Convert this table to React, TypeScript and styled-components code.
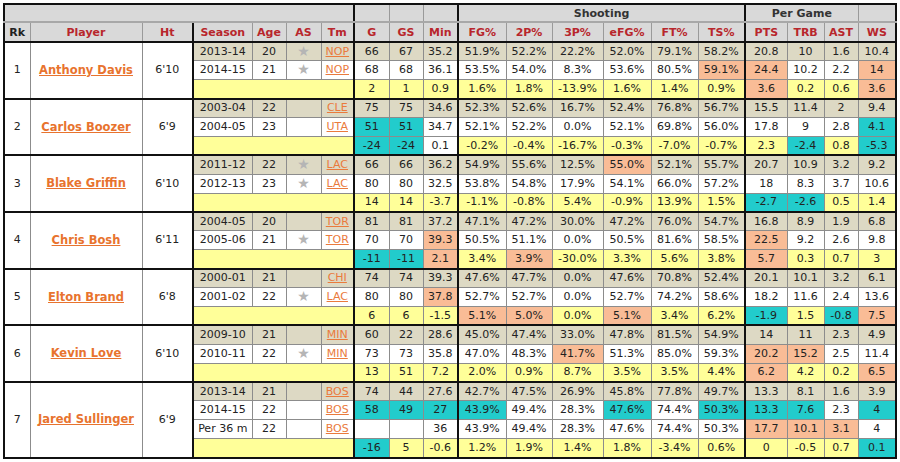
import React from 'react';
import styled, { createGlobalStyle } from 'styled-components';

const Global = createGlobalStyle`
  html, body { margin: 0; padding: 0; background: #ffffff; }
  body { font-family: "DejaVu Sans", Verdana, sans-serif; }
`;

type Bg = 'tan' | 'white' | 'yellow' | 'o' | 'c' | 'w' | 'gray';

const bgColor: Record<Bg, string> = {
  tan: '#ddd9c4',
  white: '#ffffff',
  yellow: '#ffff99',
  o: '#f9bc96',
  c: '#22cccc',
  w: '#ffffff',
  gray: '#d9d9d9',
};

const Page = styled.div`
  width: 900px;
  height: 462px;
  overflow: hidden;
  padding: 3px 0 0 3px;
  box-sizing: border-box;
`;

const Table = styled.table`
  border-collapse: collapse;
  table-layout: fixed;
  width: 894px;
  border: 2px solid #111;
  font-size: 11px;
  color: #222;
`;

const Col = styled.col<{ $w: number }>`
  width: ${(p) => p.$w}px;
`;

const GroupTh = styled.th<{ $thick?: boolean }>`
  height: 16px;
  padding: 0;
  background: #d9d9d9;
  border: 1px solid #9a9a9a;
  border-right: ${(p) => (p.$thick ? '2px solid #111' : '1px solid #9a9a9a')};
  border-bottom: 2px solid #a8a8a8;
  font-weight: bold;
  color: #333;
  text-align: center;
  font-size: 11px;
`;

const HeadTh = styled.th<{ $thick?: boolean; $black?: boolean }>`
  height: 18px;
  padding: 0;
  background: #d9d9d9;
  border: 1px solid #9a9a9a;
  border-right: ${(p) => (p.$thick ? '2px solid #111' : '1px solid #9a9a9a')};
  border-bottom: 2px solid #111;
  font-weight: bold;
  color: ${(p) => (p.$black ? '#222' : '#b8262c')};
  text-align: center;
  font-size: 11px;
  white-space: nowrap;
`;

const Tr = styled.tr`
  height: 18.9px;
`;

const Td = styled.td<{ $bg: Bg; $thick?: boolean; $last?: boolean }>`
  padding: 0;
  background: ${(p) => bgColor[p.$bg]};
  border: 1px solid #8c8c8c;
  border-right: ${(p) => (p.$thick ? '2px solid #111' : '1px solid #8c8c8c')};
  border-bottom: ${(p) => (p.$last ? '2px solid #111' : '1px solid #8c8c8c')};
  text-align: center;
  white-space: nowrap;
  overflow: hidden;
  line-height: 14px;
`;

const PlayerLink = styled.a`
  color: #e8732e;
  font-weight: bold;
  font-size: 11.5px;
  text-decoration: underline;
`;

const TeamLink = styled.a`
  color: #ea7a3c;
  text-decoration: underline;
`;

const Star = styled.span`
  color: #b5b5b5;
  font-size: 14px;
  line-height: 1;
`;

const widths = [26, 112, 51, 59, 34, 35, 33, 35, 34, 35, 48, 46, 51, 48, 47, 47, 42, 37, 34, 38];
// thick right border after these column indexes
const thickAfter = new Set([2, 6, 9, 15, 19]);

const headers = ['Rk', 'Player', 'Ht', 'Season', 'Age', 'AS', 'Tm', 'G', 'GS', 'Min', 'FG%', '2P%', '3P%', 'eFG%', 'FT%', 'TS%', 'PTS', 'TRB', 'AST', 'WS'];

type Row = { s: string; a: string; star: boolean; tm: string; v: string };
type Block = { rk: number; name: string; ht: string; rows: Row[]; diff: string };

const blocks: Block[] = [
  {
    rk: 1, name: 'Anthony Davis', ht: "6'10",
    rows: [
      { s: '2013-14', a: '20', star: true, tm: 'NOP', v: '66 67 35.2 51.9% 52.2% 22.2% 52.0% 79.1% 58.2% 20.8 10 1.6 10.4' },
      { s: '2014-15', a: '21', star: true, tm: 'NOP', v: '68 68 36.1 53.5% 54.0% 8.3% 53.6% 80.5% 59.1%:o 24.4:o 10.2 2.2 14:o' },
    ],
    diff: '2 1 0.9 1.6% 1.8% -13.9% 1.6% 1.4% 0.9% 3.6:o 0.2 0.6 3.6:o',
  },
  {
    rk: 2, name: 'Carlos Boozer', ht: "6'9",
    rows: [
      { s: '2003-04', a: '22', star: false, tm: 'CLE', v: '75 75 34.6 52.3% 52.6% 16.7% 52.4% 76.8% 56.7% 15.5 11.4 2 9.4' },
      { s: '2004-05', a: '23', star: false, tm: 'UTA', v: '51:c 51:c 34.7 52.1% 52.2% 0.0% 52.1% 69.8% 56.0% 17.8 9 2.8 4.1:c' },
    ],
    diff: '-24:c -24:c 0.1:w -0.2% -0.4% -16.7% -0.3% -7.0% -0.7% 2.3 -2.4:c 0.8 -5.3:c',
  },
  {
    rk: 3, name: 'Blake Griffin', ht: "6'10",
    rows: [
      { s: '2011-12', a: '22', star: true, tm: 'LAC', v: '66 66 36.2 54.9% 55.6% 12.5% 55.0%:o 52.1% 55.7% 20.7 10.9 3.2 9.2' },
      { s: '2012-13', a: '23', star: true, tm: 'LAC', v: '80 80 32.5 53.8% 54.8% 17.9% 54.1% 66.0% 57.2% 18 8.3 3.7 10.6' },
    ],
    diff: '14 14 -3.7 -1.1% -0.8% 5.4% -0.9% 13.9% 1.5% -2.7:c -2.6:c 0.5 1.4',
  },
  {
    rk: 4, name: 'Chris Bosh', ht: "6'11",
    rows: [
      { s: '2004-05', a: '20', star: false, tm: 'TOR', v: '81 81 37.2 47.1% 47.2% 30.0% 47.2% 76.0% 54.7% 16.8 8.9 1.9 6.8' },
      { s: '2005-06', a: '21', star: true, tm: 'TOR', v: '70 70 39.3:o 50.5% 51.1% 0.0% 50.5% 81.6% 58.5% 22.5:o 9.2 2.6 9.8' },
    ],
    diff: '-11:c -11:c 2.1:o 3.4% 3.9%:o -30.0% 3.3% 5.6% 3.8% 5.7:o 0.3 0.7 3',
  },
  {
    rk: 5, name: 'Elton Brand', ht: "6'8",
    rows: [
      { s: '2000-01', a: '21', star: false, tm: 'CHI', v: '74 74 39.3 47.6% 47.7% 0.0% 47.6% 70.8% 52.4% 20.1 10.1 3.2 6.1' },
      { s: '2001-02', a: '22', star: true, tm: 'LAC', v: '80 80 37.8:o 52.7% 52.7% 0.0% 52.7% 74.2% 58.6% 18.2 11.6 2.4 13.6' },
    ],
    diff: '6 6 -1.5 5.1%:o 5.0%:o 0.0% 5.1%:o 3.4% 6.2% -1.9:c 1.5 -0.8:c 7.5:o',
  },
  {
    rk: 6, name: 'Kevin Love', ht: "6'10",
    rows: [
      { s: '2009-10', a: '21', star: false, tm: 'MIN', v: '60 22 28.6 45.0% 47.4% 33.0% 47.8% 81.5% 54.9% 14 11 2.3 4.9' },
      { s: '2010-11', a: '22', star: true, tm: 'MIN', v: '73 73 35.8 47.0% 48.3% 41.7%:o 51.3% 85.0% 59.3% 20.2:o 15.2:o 2.5 11.4' },
    ],
    diff: '13 51 7.2 2.0% 0.9% 8.7% 3.5% 3.5% 4.4% 6.2:o 4.2 0.2 6.5:o',
  },
  {
    rk: 7, name: 'Jared Sullinger', ht: "6'9",
    rows: [
      { s: '2013-14', a: '21', star: false, tm: 'BOS', v: '74 44 27.6 42.7% 47.5% 26.9% 45.8% 77.8% 49.7% 13.3 8.1 1.6 3.9' },
      { s: '2014-15', a: '22', star: false, tm: 'BOS', v: '58:c 49:c 27:c 43.9%:c 49.4% 28.3% 47.6%:c 74.4% 50.3%:c 13.3:c 7.6:c 2.3 4:c' },
      { s: 'Per 36 m', a: '22', star: false, tm: 'BOS', v: '_ _ 36 43.9% 49.4% 28.3% 47.6% 74.4% 50.3% 17.7:o 10.1:o 3.1:o 4' },
    ],
    diff: '-16:c 5 -0.6 1.2% 1.9% 1.4% 1.8% -3.4% 0.6% 0 -0.5 0.7 0.1:c',
  },
];

const parse = (v: string, base: Bg) =>
  v.split(' ').map((tok) => {
    const [text, mark] = tok.split(':');
    return { text: text === '_' ? '' : text, bg: (mark as Bg) || base };
  });

const ValueCells: React.FC<{ v: string; base: Bg; last?: boolean }> = ({ v, base, last }) => (
  <>
    {parse(v, base).map((c, i) => (
      <Td key={i} $bg={c.bg} $thick={thickAfter.has(i + 7)} $last={last}>
        {c.text}
      </Td>
    ))}
  </>
);

const PlayerBlock: React.FC<{ b: Block }> = ({ b }) => {
  const span = b.rows.length + 1;
  return (
    <>
      {b.rows.map((r, i) => {
        const base: Bg = i === 0 ? 'tan' : 'white';
        return (
          <Tr key={i}>
            {i === 0 && (
              <>
                <Td $bg="white" rowSpan={span} $last>{b.rk}</Td>
                <Td $bg="white" rowSpan={span} $last>
                  <PlayerLink>{b.name}</PlayerLink>
                </Td>
                <Td $bg="white" rowSpan={span} $thick $last>{b.ht}</Td>
              </>
            )}
            <Td $bg={base}>{r.s}</Td>
            <Td $bg={base}>{r.a}</Td>
            <Td $bg={base}>{r.star ? <Star>★</Star> : ''}</Td>
            <Td $bg={base} $thick>
              <TeamLink>{r.tm}</TeamLink>
            </Td>
            <ValueCells v={r.v} base={base} />
          </Tr>
        );
      })}
      <Tr>
        <Td $bg="yellow" colSpan={4} $thick $last />
        <ValueCells v={b.diff} base="yellow" last />
      </Tr>
    </>
  );
};

export default function App() {
  return (
    <Page>
      <Global />
      <Table>
        <colgroup>
          {widths.map((w, i) => (
            <Col key={i} $w={w} />
          ))}
        </colgroup>
        <thead>
          <tr>
            <GroupTh colSpan={7} $thick />
            <GroupTh />
            <GroupTh />
            <GroupTh $thick />
            <GroupTh colSpan={6} $thick>Shooting</GroupTh>
            <GroupTh colSpan={3}>Per Game</GroupTh>
            <GroupTh $thick />
          </tr>
          <tr>
            {headers.map((h, i) => (
              <HeadTh key={h} $thick={thickAfter.has(i)} $black={h === 'Rk'}>
                {h}
              </HeadTh>
            ))}
          </tr>
        </thead>
        <tbody>
          {blocks.map((b) => (
            <PlayerBlock key={b.rk} b={b} />
          ))}
        </tbody>
      </Table>
    </Page>
  );
}
